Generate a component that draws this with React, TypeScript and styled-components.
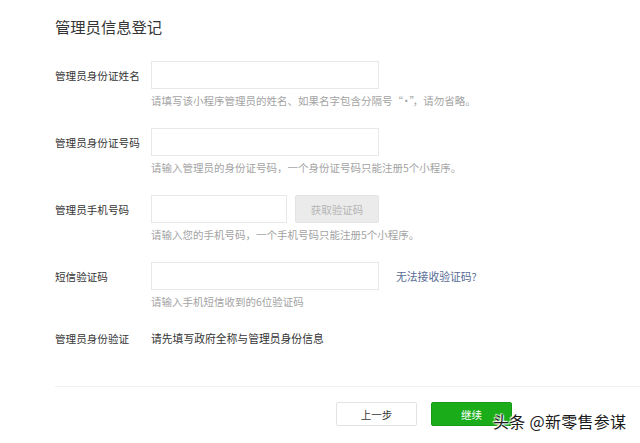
import React from "react";
import styled, { createGlobalStyle } from "styled-components";

const Global = createGlobalStyle`
  html, body { margin: 0; padding: 0; background: #fff; }
  body { font-family: "Noto Sans CJK SC", "Noto Sans", sans-serif; color: #353535; }
  * { box-sizing: border-box; }
`;

const Page = styled.div`
  position: relative;
  width: 640px;
  height: 443px;
  overflow: hidden;
  background: #fff;
`;

const Title = styled.h1`
  margin: 0;
  padding: 16px 0 0 55px;
  height: 61px;
  font-size: 15.3px;
  font-weight: 400;
  line-height: 20px;
  color: #353535;
`;

const Form = styled.div`
  display: flex;
  flex-direction: column;
  padding-left: 55px;
`;

const Row = styled.div<{ $last?: boolean }>`
  display: grid;
  grid-template-columns: 96px 1fr;
  margin-bottom: ${(p) => (p.$last ? 0 : 19)}px;
`;

const Label = styled.div<{ $h?: number }>`
  height: ${(p) => p.$h ?? 28}px;
  display: flex;
  align-items: center;
  font-size: 10.6px;
  color: #353535;
  white-space: nowrap;
`;

const Field = styled.div`
  display: flex;
  flex-direction: column;
`;

const Line = styled.div`
  display: flex;
  align-items: center;
  gap: 8px;
`;

const Input = styled.div<{ $w: number }>`
  width: ${(p) => p.$w}px;
  height: 28px;
  border: 1px solid #e8e8e8;
  background: #fff;
`;

const Hint = styled.div`
  margin-top: 4px;
  height: 16px;
  line-height: 16px;
  font-size: 10.5px;
  color: #a3a3a3;
  white-space: nowrap;
`;

const Quote = styled.span`
  letter-spacing: -2px;
`;

const CodeButton = styled.div`
  width: 84px;
  height: 28px;
  background: #ebebeb;
  border: 1px solid #e3e3e3;
  border-radius: 2px;
  display: flex;
  align-items: center;
  justify-content: center;
  font-size: 10.5px;
  color: #b5b5b5;
`;

const Link = styled.span`
  margin-left: 9px;
  font-size: 10.8px;
  color: #576b95;
`;

const Plain = styled.div`
  height: 18px;
  display: flex;
  align-items: center;
  font-size: 10.8px;
  color: #353535;
`;

const Divider = styled.div`
  margin: 39px 0 0 55px;
  height: 1px;
  background: #f0f0f0;
`;

const Actions = styled.div`
  display: flex;
  gap: 14px;
  padding: 15px 0 0 336px;
`;

const Button = styled.div<{ $primary?: boolean }>`
  width: 81px;
  height: 24px;
  border-radius: 2px;
  display: flex;
  align-items: center;
  justify-content: center;
  font-size: 10.5px;
  background: ${(p) => (p.$primary ? "#1aad19" : "#fff")};
  color: ${(p) => (p.$primary ? "#fff" : "#353535")};
  border: 1px solid ${(p) => (p.$primary ? "#179b16" : "#e3e3e3")};
`;

const Watermark = styled.div`
  position: absolute;
  left: 493px;
  top: 411px;
  font-size: 16px;
  line-height: 21px;
  letter-spacing: 0.3px;
  color: #1a1a1a;
  white-space: nowrap;
  text-shadow: 0 0 2px #fff, 0 0 2px #fff, 1px 1px 1px #fff, -1px -1px 1px #fff;
`;

export default function App() {
  return (
    <Page>
      <Global />
      <Title>管理员信息登记</Title>
      <Form>
        <Row>
          <Label>管理员身份证姓名</Label>
          <Field>
            <Input $w={228} />
            <Hint>
              请填写该小程序管理员的姓名、如果名字包含分隔号<Quote>“·”</Quote>，请勿省略。
            </Hint>
          </Field>
        </Row>
        <Row>
          <Label>管理员身份证号码</Label>
          <Field>
            <Input $w={228} />
            <Hint>请输入管理员的身份证号码，一个身份证号码只能注册5个小程序。</Hint>
          </Field>
        </Row>
        <Row>
          <Label>管理员手机号码</Label>
          <Field>
            <Line>
              <Input $w={136} />
              <CodeButton>获取验证码</CodeButton>
            </Line>
            <Hint>请输入您的手机号码，一个手机号码只能注册5个小程序。</Hint>
          </Field>
        </Row>
        <Row>
          <Label>短信验证码</Label>
          <Field>
            <Line>
              <Input $w={228} />
              <Link>无法接收验证码?</Link>
            </Line>
            <Hint>请输入手机短信收到的6位验证码</Hint>
          </Field>
        </Row>
        <Row $last>
          <Label $h={18}>管理员身份验证</Label>
          <Plain>请先填写政府全称与管理员身份信息</Plain>
        </Row>
      </Form>
      <Divider />
      <Actions>
        <Button>上一步</Button>
        <Button $primary>继续</Button>
      </Actions>
      <Watermark>头条 @新零售参谋</Watermark>
    </Page>
  );
}
